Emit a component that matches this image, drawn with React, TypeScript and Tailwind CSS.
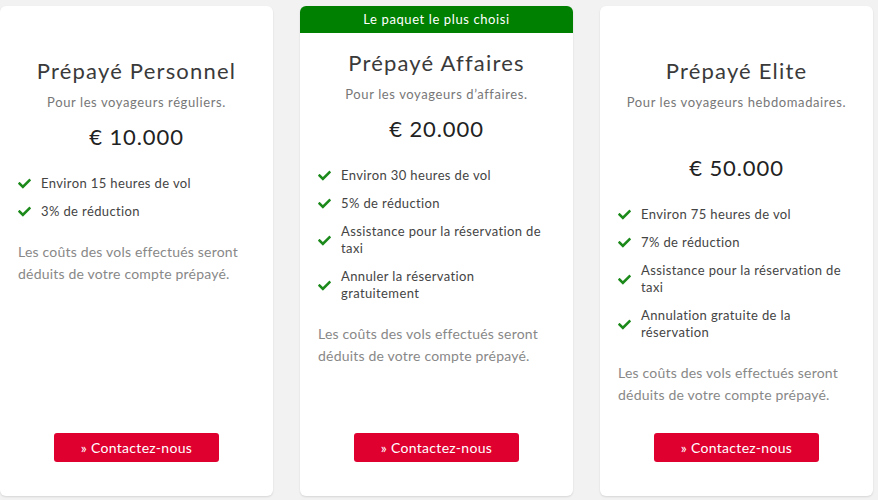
import React from "react";

type Plan = {
  title: string;
  subtitle: string;
  price: string;
  features: string[][];
  badge?: string;
  priceMt: string;
};

const plans: Plan[] = [
  {
    title: "Prépayé Personnel",
    subtitle: "Pour les voyageurs réguliers.",
    price: "€ 10.000",
    features: [["Environ 15 heures de vol"], ["3% de réduction"]],
    priceMt: "mt-[11px]",
  },
  {
    title: "Prépayé Affaires",
    subtitle: "Pour les voyageurs d’affaires.",
    price: "€ 20.000",
    badge: "Le paquet le plus choisi",
    features: [
      ["Environ 30 heures de vol"],
      ["5% de réduction"],
      ["Assistance pour la réservation de", "taxi"],
      ["Annuler la réservation", "gratuitement"],
    ],
    priceMt: "mt-[11px]",
  },
  {
    title: "Prépayé Elite",
    subtitle: "Pour les voyageurs hebdomadaires.",
    price: "€ 50.000",
    features: [
      ["Environ 75 heures de vol"],
      ["7% de réduction"],
      ["Assistance pour la réservation de", "taxi"],
      ["Annulation gratuite de la", "réservation"],
    ],
    priceMt: "mt-[42px]",
  },
];

function Check() {
  return (
    <svg width="13" height="11" viewBox="0 0 512 400" className="shrink-0">
      <path
        fill="#1b8a1b"
        d="M173.9 389.4L7.5 223c-10-10-10-26.2 0-36.2l36.2-36.2c10-10 26.2-10 36.2 0L192 262.7 432.1 22.5c10-10 26.2-10 36.2 0l36.2 36.2c10 10 10 26.2 0 36.2L210.1 389.4c-10 10-26.2 10-36.2 0z"
      />
    </svg>
  );
}

function Card({ plan }: { plan: Plan }) {
  return (
    <div className="w-[273px] h-[490px] shrink-0 bg-white rounded-[6px] shadow-[0_1px_2px_rgba(0,0,0,0.12)] flex flex-col overflow-hidden">
      {plan.badge ? (
        <div className="h-[27px] bg-[#008000] text-white text-[13px] tracking-[0.6px] flex items-center justify-center rounded-t-[4px]">
          {plan.badge}
        </div>
      ) : null}
      <div className={`flex flex-col items-center ${plan.badge ? "pt-[16px]" : "pt-[51px]"}`}>
        <div className="text-[22px] leading-[28px] tracking-[1.2px] text-[#3a3a3a]">{plan.title}</div>
        <div className="mt-[7px] text-[13px] leading-[20px] tracking-[0.6px] text-[#777]">{plan.subtitle}</div>
        <div className={`${plan.priceMt} text-[22px] leading-[28px] tracking-[0.9px] text-[#222]`}>{plan.price}</div>
      </div>
      <div className="px-[18px] mt-[24px] flex flex-col gap-[11px]">
        {plan.features.map((lines, i) => (
          <div key={i} className="flex items-center">
            <div className="w-[23px] flex items-center">
              <Check />
            </div>
            <div className="text-[13px] leading-[17px] tracking-[0.38px] text-[#444]">
              {lines.map((l, j) => (
                <div key={j}>{l}</div>
              ))}
            </div>
          </div>
        ))}
      </div>
      <div className="px-[18px] mt-[21px] text-[14px] leading-[22px] tracking-[0.2px] text-[#888]">
        <div>Les coûts des vols effectués seront</div>
        <div>déduits de votre compte prépayé.</div>
      </div>
      <div className="mt-auto mb-[34px] flex justify-center">
        <button className="w-[165px] h-[29px] bg-[#df0030] text-white text-[14px] tracking-[0.3px] rounded-[3px] flex items-center justify-center">
          » Contactez-nous
        </button>
      </div>
    </div>
  );
}

export default function App() {
  return (
    <div
      className="min-h-[500px] w-[878px] bg-[#f2f2f2] flex gap-[27px] pt-[6px] overflow-hidden"
      style={{ fontFamily: "Lato, 'Noto Sans', sans-serif" }}
    >
      {plans.map((p) => (
        <Card key={p.title} plan={p} />
      ))}
    </div>
  );
}
